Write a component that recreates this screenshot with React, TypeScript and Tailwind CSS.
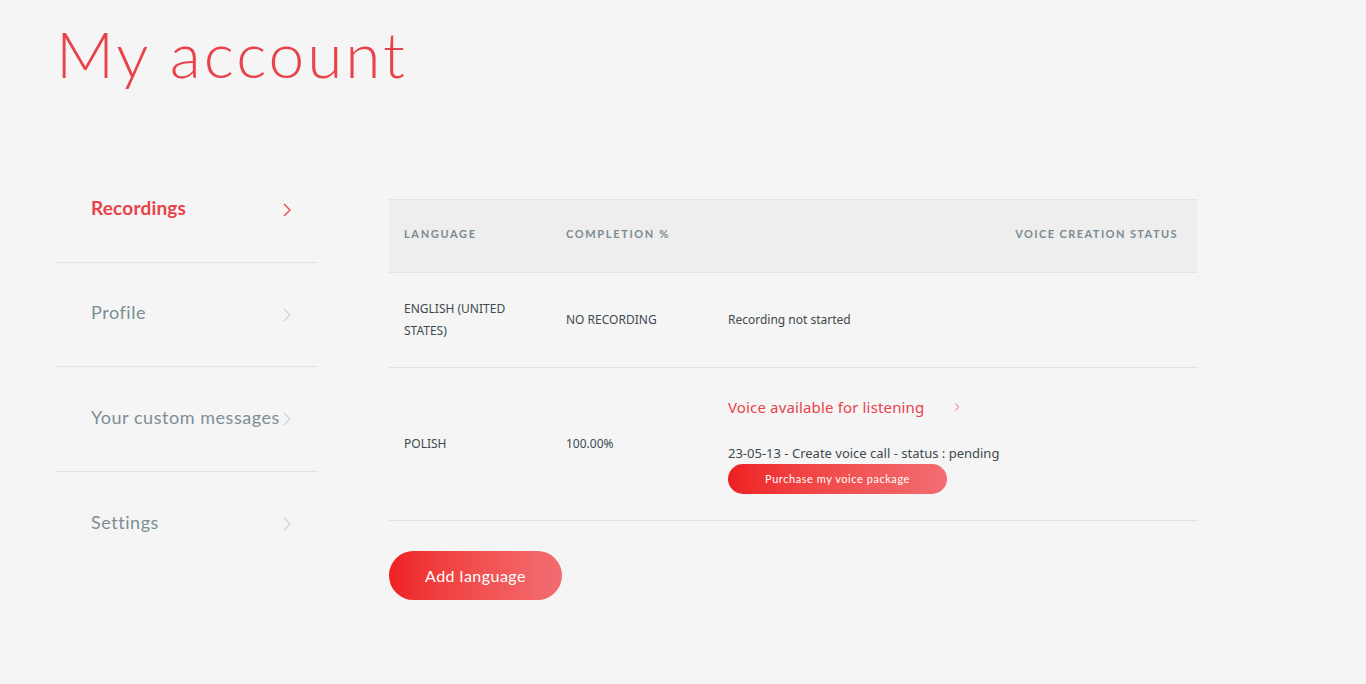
import React from "react";

const heading = { fontFamily: '"Lato", "Noto Sans", sans-serif' };
const body = { fontFamily: '"Noto Sans", "Open Sans", sans-serif' };

function Chevron({ className }: { className?: string }) {
  return (
    <svg viewBox="0 0 10 16" className={className} fill="none" stroke="currentColor" strokeWidth="1.3">
      <path d="M2 2l6 6-6 6" />
    </svg>
  );
}

const navItems = [
  { label: "Recordings", active: true },
  { label: "Profile" },
  { label: "Your custom messages" },
  { label: "Settings" },
];

export default function App() {
  return (
    <div className="min-h-[684px] w-full bg-[#f5f5f5] text-[#3d4a50]" style={body}>
      <h1
        className="pl-[56px] pt-[14px] text-[64px] font-light leading-[80px] tracking-[0.045em] text-[#e8434b]"
        style={heading}
      >
        My account
      </h1>

      <div className="mt-[64px] flex items-start">
        <nav className="ml-[55px] w-[263px] shrink-0" style={heading}>
          {navItems.map((item, i) => (
            <div
              key={item.label}
              className={`relative flex h-[104.7px] items-center pb-[4px] pl-[36px] ${
                i < navItems.length - 1 ? "border-b border-[#e2e2e2]" : ""
              }`}
            >
              <span
                className={
                  item.active
                    ? "whitespace-nowrap text-[19px] font-bold tracking-[0.01em] text-[#e8434b]"
                    : "whitespace-nowrap text-[18px] tracking-[0.03em] text-[#7d8e95]"
                }
              >
                {item.label}
              </span>
              <Chevron
                className={`absolute left-[227px] top-1/2 h-[16px] w-[10px] -translate-y-1/2 ${
                  item.active ? "text-[#e8434b]" : "text-[#cfd6d8]"
                }`}
              />
            </div>
          ))}
        </nav>

        <div className="ml-[71px] w-[809px] pt-[41px]">
          <div className="grid h-[74px] grid-cols-[162px_162px_1fr] items-center border-b border-t border-[#e4e4e4] bg-[#eeeeee] px-[15px] pb-[4px] pr-[20px]">
            <span className="text-[11px] font-bold tracking-[0.15em] text-[#7b8b92]" style={heading}>LANGUAGE</span>
            <span className="text-[11px] font-bold tracking-[0.15em] text-[#7b8b92]" style={heading}>COMPLETION %</span>
            <span className="text-right text-[11px] font-bold tracking-[0.13em] text-[#7b8b92]" style={heading}>VOICE CREATION STATUS</span>
          </div>

          <div className="grid h-[95px] grid-cols-[162px_162px_1fr] items-center border-b border-[#e2e2e2] px-[15px] text-[12px]">
            <span className="leading-[22px]">ENGLISH (UNITED<br />STATES)</span>
            <span>NO RECORDING</span>
            <span>Recording not started</span>
          </div>

          <div className="grid h-[153px] grid-cols-[162px_162px_1fr] items-center border-b border-[#e2e2e2] px-[15px] text-[12px]">
            <span>POLISH</span>
            <span>100.00%</span>
            <div className="flex flex-col items-start pt-[2px]">
              <div className="flex items-center text-[15px] tracking-[0.01em] text-[#e8434b]">
                <span>Voice available for listening</span>
                <Chevron className="ml-[30px] h-[10px] w-[6px]" />
              </div>
              <span className="mt-[25px] text-[13px]">23-05-13 - Create voice call - status : pending</span>
              <button
                className="mt-[1px] h-[30px] w-[219px] rounded-full bg-gradient-to-r from-[#ee1f22] to-[#f26d72] text-[11px] tracking-[0.05em] text-white"
                style={heading}
              >
                Purchase my voice package
              </button>
            </div>
          </div>

          <button
            className="mt-[30px] h-[49px] w-[173px] rounded-full bg-gradient-to-r from-[#ee1f22] to-[#f26d72] text-[16px] tracking-[0.03em] text-white"
            style={heading}
          >
            Add language
          </button>
        </div>
      </div>
    </div>
  );
}
